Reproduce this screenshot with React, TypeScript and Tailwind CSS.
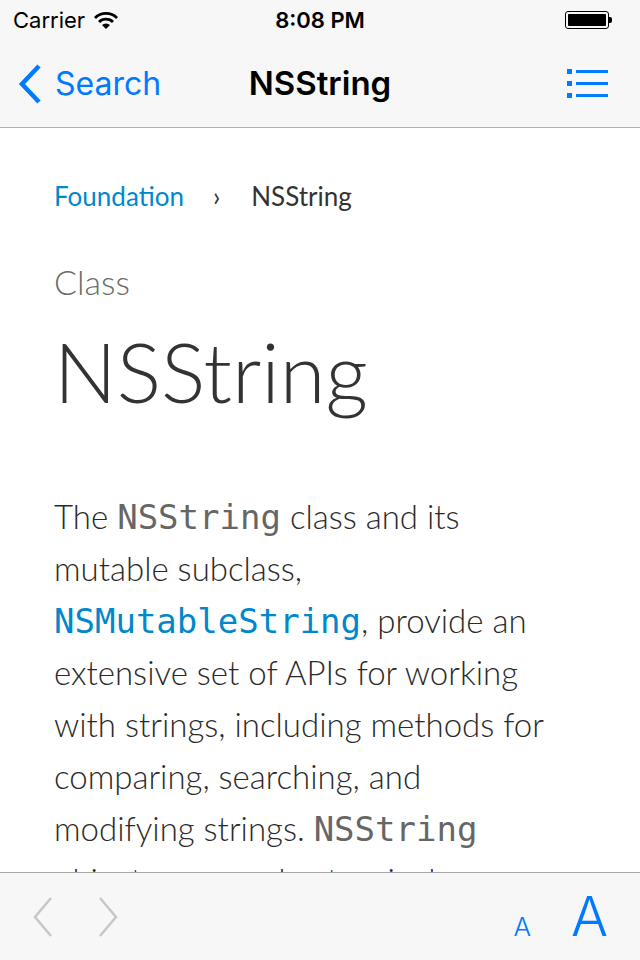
const blue = "text-[#007aff]";

function StatusBar() {
  return (
    <div className="flex h-[40px] items-center justify-between bg-[#f7f7f7] px-[13px] font-['Inter',sans-serif] text-[22px] text-black">
      <div className="flex w-[160px] items-center gap-[8px]">
        <span>Carrier</span>
        <svg width="26" height="20" viewBox="0 0 26 20">
          <path d="M13 19 L9 15 A6 6 0 0 1 17 15 Z" fill="#000" />
          <path d="M5 11 A11.5 11.5 0 0 1 21 11 L19 13 A8.5 8.5 0 0 0 7 13 Z" fill="#000" />
          <path d="M1 7 A17 17 0 0 1 25 7 L23 9 A14 14 0 0 0 3 9 Z" fill="#000" />
        </svg>
      </div>
      <span className="font-semibold">8:08 PM</span>
      <div className="flex w-[160px] items-center justify-end pr-[15px]">
        <div className="flex h-[18px] w-[44px] items-center rounded-[3px] border border-black p-[2px]">
          <div className="h-full w-full rounded-[1px] bg-black" />
        </div>
        <div className="h-[6px] w-[3px] rounded-r-[2px] bg-black" />
      </div>
    </div>
  );
}

function NavBar() {
  return (
    <div className="relative flex h-[88px] items-center border-b border-[#b2b2b2] bg-[#f7f7f7] font-['Inter',sans-serif]">
      <div className={`flex items-center pl-[17px] ${blue}`}>
        <svg width="26" height="42" viewBox="0 0 26 42">
          <path d="M22 3 L5 21 L22 39" fill="none" stroke="#007aff" strokeWidth="4.5" />
        </svg>
        <span className="ml-[12px] text-[32px] leading-none">Search</span>
      </div>
      <div className="absolute left-0 right-0 text-center text-[33px] font-semibold leading-none text-black">
        NSString
      </div>
      <div className="ml-auto pr-[32px]">
        <svg width="41" height="30" viewBox="0 0 41 30">
          <rect x="0" y="0" width="5" height="5" fill="#007aff" />
          <rect x="0" y="12" width="5" height="5" fill="#007aff" />
          <rect x="0" y="24" width="5" height="5" fill="#007aff" />
          <rect x="9" y="1" width="32" height="3" fill="#007aff" />
          <rect x="9" y="13" width="32" height="3" fill="#007aff" />
          <rect x="9" y="25" width="32" height="3" fill="#007aff" />
        </svg>
      </div>
    </div>
  );
}

function Code({ children, link }: { children: string; link?: boolean }) {
  return (
    <span
      className={`font-['DejaVu_Sans_Mono',monospace] text-[34px] leading-none ${
        link ? "text-[#0088cc]" : "text-[#666666]"
      }`}
    >
      {children}
    </span>
  );
}

function Toolbar() {
  return (
    <div className="flex h-[88px] items-center border-t border-[#a9a9a9] bg-[#f7f7f7] font-['Inter',sans-serif]">
      <div className="flex items-center gap-[45px] pl-[33px]">
        <svg width="20" height="42" viewBox="0 0 20 42">
          <path d="M18 2 L2 21 L18 40" fill="none" stroke="#c7c7c7" strokeWidth="2.5" />
        </svg>
        <svg width="20" height="42" viewBox="0 0 20 42">
          <path d="M2 2 L18 21 L2 40" fill="none" stroke="#c7c7c7" strokeWidth="2.5" />
        </svg>
      </div>
      <div className={`ml-auto flex items-baseline gap-[40px] pr-[32px] font-light ${blue}`}>
        <span className="text-[26px] leading-none">A</span>
        <span className="text-[55px] leading-none">A</span>
      </div>
    </div>
  );
}

export default function App() {
  return (
    <div className="flex h-[960px] w-[640px] flex-col overflow-hidden bg-white">
      <StatusBar />
      <NavBar />
      <div className="min-h-0 flex-1 overflow-hidden pl-[54px] pr-[20px] font-['Lato',sans-serif] font-light text-[#2a2a2a]">
        <div className="flex items-center pt-[52px] text-[26px] leading-[32px] font-normal">
          <span className="text-[#0088cc]">Foundation</span>
          <span className="ml-[29px] text-[#333333]">›</span>
          <span className="ml-[31px] text-[#333333]">NSString</span>
        </div>
        <div className="mt-[50px] text-[34px] leading-[40px] text-[#6b6b6b]">Class</div>
        <h1 className="mt-[19px] text-[83px] leading-[100px] text-[#333333]">NSString</h1>
        <p className="mt-[69px] text-[33px] leading-[52px]">
          The <Code>NSString</Code> class and its
          <br />
          mutable subclass,
          <br />
          <Code link>NSMutableString</Code>, provide an
          <br />
          extensive set of APIs for working
          <br />
          with strings, including methods for
          <br />
          comparing, searching, and
          <br />
          modifying strings. <Code>NSString</Code>
          <br />
          objects are used extensively
        </p>
      </div>
      <Toolbar />
    </div>
  );
}
